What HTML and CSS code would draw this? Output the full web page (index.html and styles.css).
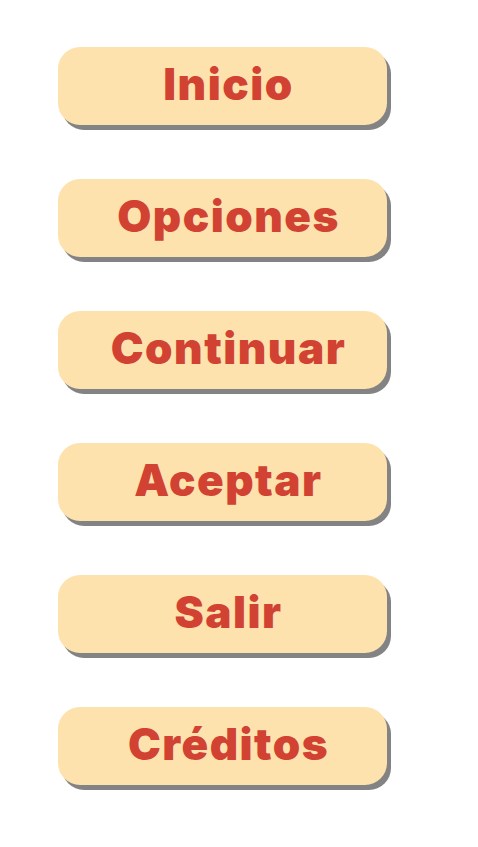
FILE: index.html
```html
<!DOCTYPE html>
<html lang="es">
<head>
<meta charset="utf-8">
<title>Menú</title>
<link rel="stylesheet" href="styles.css">
</head>
<body>
<nav class="menu">
  <button class="btn">Inicio</button>
  <button class="btn">Opciones</button>
  <button class="btn">Continuar</button>
  <button class="btn">Aceptar</button>
  <button class="btn">Salir</button>
  <button class="btn">Créditos</button>
</nav>
</body>
</html>
```
FILE: styles.css
```css
html, body {
  margin: 0;
  padding: 0;
  background: #ffffff;
}
.menu {
  display: flex;
  flex-direction: column;
  gap: 54px;
  padding: 47px 0 60px 58px;
}
.btn {
  width: 329px;
  height: 78px;
  border: none;
  border-radius: 22px;
  background: #fde2ad;
  box-shadow: 4px 5px 0 #838383;
  color: #d14233;
  font-family: Inter, "Noto Sans", sans-serif;
  font-weight: 900;
  font-size: 44px;
  letter-spacing: 1.5px;
  padding: 0 0 4px 12px;
  display: flex;
  align-items: center;
  justify-content: center;
}
```
